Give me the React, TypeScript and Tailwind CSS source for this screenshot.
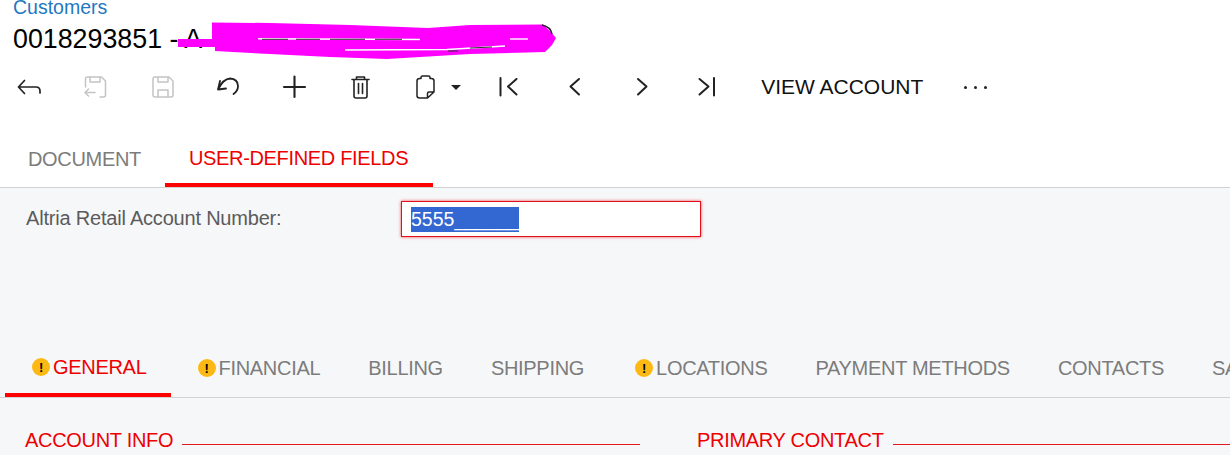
const F = "font-['Liberation_Sans',Arial,sans-serif]";

function Icon({ children, color = "#222", w = 26 }: { children: React.ReactNode; color?: string; w?: number }) {
  return (
    <svg width={w} height="26" viewBox="0 0 26 26" fill="none" stroke={color} strokeWidth="1.7" strokeLinecap="round" strokeLinejoin="round">
      {children}
    </svg>
  );
}

function Warn() {
  return (
    <span className="w-[18px] h-[18px] rounded-full bg-[#fdb913] flex items-center justify-center text-[13px] font-bold text-black leading-none shrink-0">!</span>
  );
}

function Tab({ label, warn, active }: { label: string; warn?: boolean; active?: boolean }) {
  return (
    <div
      className={`flex items-center gap-[3px] h-[52px] px-[24px] border-b-[4px] text-[20px] tracking-[-0.3px] whitespace-nowrap shrink-0 ${active ? "pb-[4px] border-[#ff0000] text-[#ee0000]" : "pb-[2px] border-transparent text-[#7c7c7c]"}`}
    >
      {warn && <span className="ml-[3px]"><Warn /></span>}
      <span>{label}</span>
    </div>
  );
}

export default function App() {
  const btn = "w-[66.3px] flex justify-center shrink-0";
  return (
    <div className={`${F} w-[1230px] h-[455px] overflow-hidden bg-white flex flex-col`}>
      <div className="h-[187px] shrink-0 flex flex-col">
        <div className="pl-[13px] h-[19px] flex items-end">
          <span className="text-[#1f78c1] text-[19.5px] leading-[24px]">Customers</span>
        </div>
        <div className="pl-[13px] h-[41px] flex items-center relative text-[26.8px] text-black whitespace-nowrap">
          <span>0018293851 - A</span>
          <svg className="absolute left-[170px] top-[-4px]" width="400" height="50" viewBox="0 0 400 50" fill="none">
            <path
              d="M42 7.5 L100 8 L180 10 L258 13 L300 10 L373 9.5 L380 16 L386 23 L382 30 L375 37 L300 39 L217 44 L160 42 L100 39 L45 36 L45 32 L8 32 L8 24 L42 24 Z"
              fill="#ff00ff"
            />
            <path d="M88 23.8 L250 24.5" stroke="#ffffff" strokeWidth="1.5" />
            <path d="M92 24.3 L118 24.3 M126 24.3 L150 24.3 M160 24.3 L195 24.3 M205 24.3 L232 24.3" stroke="#333333" strokeWidth="1" />
            <path d="M175 35 L277 34.5 L335 31" stroke="#ffffff" strokeWidth="1.5" />
            <path d="M278 36 L288 36 M300 33 L322 32" stroke="#333333" strokeWidth="1.2" />
            <path d="M340 24 L358 24" stroke="#ffffff" strokeWidth="1.4" />
            <path d="M372 10 Q381 12 382 19" stroke="#222222" strokeWidth="1.5" />
          </svg>
        </div>
        <div className="flex items-center h-[30px] mt-[12px]">
          <div className="w-[58px] flex justify-center shrink-0">
            <Icon><path d="M8.5 6.5 L2.5 13 L8.5 19.5 M2.5 13 H20 Q24 13 24 17 V19" /></Icon>
          </div>
          <div className="w-[74px] flex justify-center shrink-0">
            <Icon color="#c4c4c4">
              <path d="M3.5 13 V5 Q3.5 3 5.5 3 H19.5 L23.5 7 V21 Q23.5 23 21.5 23 H18 M8 3 V8 H18 V3 M3 18.5 L6.5 15 M3 18.5 L6.5 22 M3 18.5 H13" strokeWidth="1.5" />
            </Icon>
          </div>
          <div className="w-[60px] flex justify-center shrink-0">
            <Icon color="#c4c4c4">
              <path d="M4 5 Q4 3 6 3 H20 L24 7 V21 Q24 23 22 23 H6 Q4 23 4 21 Z M9 3 V8 H19 V3 M9 23 V16 H19 V23" strokeWidth="1.5" />
            </Icon>
          </div>
          <div className="w-[72px] flex justify-center shrink-0">
            <Icon><path d="M5 7 L3 15.5 L11 14.5 M3.5 15 Q8 5 15 4.5 Q23 5 23 12 Q23 17 18.5 20" strokeWidth="1.8" /></Icon>
          </div>
          <div className="w-[60px] flex justify-center shrink-0">
            <Icon><path d="M13.5 2.5 V23 M3 13 H24" strokeWidth="2.1" /></Icon>
          </div>
          <div className="w-[74px] flex justify-center shrink-0">
            <Icon><path d="M4 5.5 H21 M8.5 5.5 V3 H16.5 V5.5 M6 5.5 V22 Q6 24 8 24 H17 Q19 24 19 22 V5.5 M10.5 9.5 V19.5 M14.5 9.5 V19.5" strokeWidth="1.6" /></Icon>
          </div>
          <div className="w-[54px] flex justify-center shrink-0">
            <Icon><path d="M9 4.5 H7.5 Q5 4.5 5 7 V21.5 Q5 24 7.5 24 H15.5 L22 18 V7 Q22 4.5 19.5 4.5 H18 M9 4.5 V3.5 Q9 2 10.5 2 H16.5 Q18 2 18 3.5 V4.5 M22 18 H17 Q15.5 18 15.5 19.5 V24" strokeWidth="1.5" /></Icon>
          </div>
          <div className="w-[18px] flex items-center shrink-0 -ml-[1px]">
            <span className="w-0 h-0 border-l-[5px] border-r-[5px] border-t-[5px] border-l-transparent border-r-transparent border-t-[#222]" />
          </div>
          <div className="w-[66.3px] flex justify-center shrink-0 ml-[6px]">
            <Icon><path d="M5.5 4 V21.5 M21.5 5 L13 12.5 L21.5 20.5" strokeWidth="2" /></Icon>
          </div>
          <div className={btn}>
            <Icon><path d="M18 5 L9.5 12.5 L18 20.5" strokeWidth="2" /></Icon>
          </div>
          <div className={btn}>
            <Icon><path d="M10 5 L18.5 12.5 L10 20.5" strokeWidth="2" /></Icon>
          </div>
          <div className={btn}>
            <Icon><path d="M5.5 5 L14.5 12.5 L5.5 20.5 M20 4 V21.5" strokeWidth="2" /></Icon>
          </div>
          <span className="ml-[21px] text-[21px] text-[#111] whitespace-nowrap">VIEW ACCOUNT</span>
          <div className="ml-[41px] flex gap-[7px]">
            <span className="w-[3px] h-[3px] rounded-full bg-[#222]" />
            <span className="w-[3px] h-[3px] rounded-full bg-[#222]" />
            <span className="w-[3px] h-[3px] rounded-full bg-[#222]" />
          </div>
        </div>
        <div className="flex items-end mt-auto">
          <div className="h-[50px] pl-[28px] pr-[24px] pb-[6px] flex items-center text-[20px] text-[#7c7c7c] tracking-[-0.33px]">DOCUMENT</div>
          <div className="h-[50px] pl-[24px] pr-[25px] pb-[4px] border-b-[4px] border-[#ff0000] flex items-center text-[20px] text-[#ee0000] tracking-[-0.33px]">USER-DEFINED FIELDS</div>
        </div>
      </div>

      <div className="flex-1 bg-[#f6f7f9] border-t border-[#d2d2d2] min-h-0">
        <div className="h-[158px] flex items-start pt-[13px] pl-[26px]">
          <span className="w-[375px] text-[20px] leading-[34px] text-[#5b5b5b] tracking-[-0.2px] shrink-0">Altria Retail Account Number:</span>
          <div className="w-[300px] h-[36px] bg-white border border-[#e0101c] shadow-[0_0_3px_rgba(240,0,0,0.7)] flex items-center pl-[9px]">
            <span className="bg-[#3367d1] text-white text-[19.5px] leading-[25px] h-[25px] whitespace-nowrap">5555______</span>
          </div>
        </div>
        <div className="flex items-end border-b border-[#d2d2d2] h-[52px] pl-[5px] overflow-hidden">
          <Tab label="GENERAL" warn active />
          <Tab label="FINANCIAL" warn />
          <Tab label="BILLING" />
          <Tab label="SHIPPING" />
          <Tab label="LOCATIONS" warn />
          <Tab label="PAYMENT METHODS" />
          <Tab label="CONTACTS" />
          <Tab label="SALES" />
        </div>
        <div className="flex pl-[25px] pt-[30px]">
          <div className="w-[615px] flex items-center gap-[9px] shrink-0">
            <span className="text-[20px] leading-[24px] text-[#ee0000] tracking-[-0.3px] whitespace-nowrap">ACCOUNT INFO</span>
            <div className="flex-1 h-px bg-[#e31b1b] mt-[9px]" />
          </div>
          <div className="ml-[57px] flex-1 flex items-center gap-[9px]">
            <span className="text-[20px] leading-[24px] text-[#ee0000] tracking-[-0.3px] whitespace-nowrap">PRIMARY CONTACT</span>
            <div className="flex-1 h-px bg-[#e31b1b] mt-[9px]" />
          </div>
        </div>
      </div>
    </div>
  );
}
